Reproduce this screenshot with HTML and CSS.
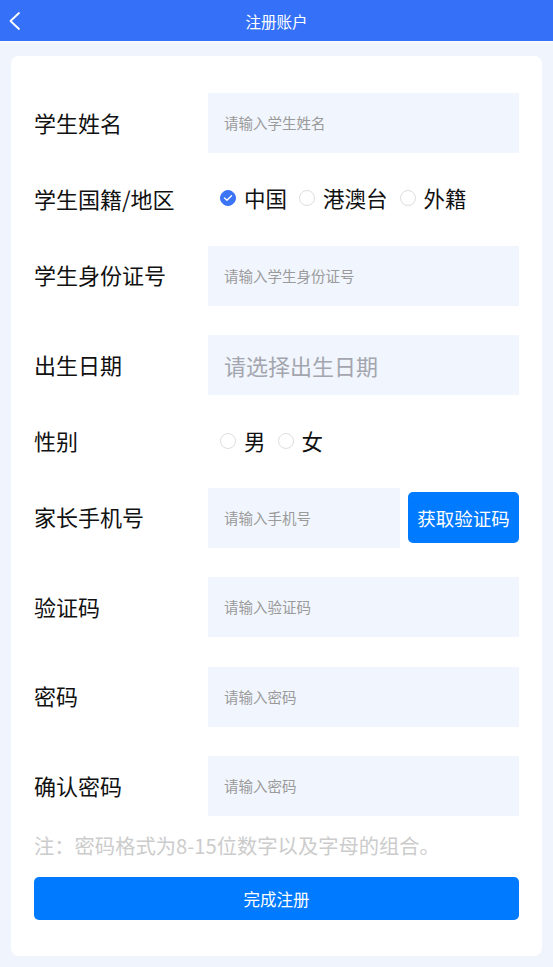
FILE: index.html
```html
<!DOCTYPE html>
<html lang="zh-CN">
<head>
<meta charset="utf-8">
<title>注册账户</title>
<link rel="stylesheet" href="styles.css">
</head>
<body>
<header class="nav">
  <span class="back">
    <svg width="12" height="20" viewBox="0 0 12 20"><polyline points="10,2 1.5,10 10,18" fill="none" stroke="#fff" stroke-width="1.8" stroke-linecap="round" stroke-linejoin="round"/></svg>
  </span>
  <h1 class="title">注册账户</h1>
  <span></span>
</header>
<main class="card">
  <div class="form">
    <div class="row">
      <label class="label">学生姓名</label>
      <div class="field">请输入学生姓名</div>
    </div>
    <div class="row row-radio">
      <label class="label">学生国籍/地区</label>
      <div class="radios">
        <span class="radio"><span class="dot checked"><svg width="10" height="8" viewBox="0 0 10 8"><polyline points="1.5,4 4,6.3 8.5,1.8" fill="none" stroke="#fff" stroke-width="1.4" stroke-linecap="round" stroke-linejoin="round"/></svg></span>中国</span>
        <span class="radio"><span class="dot"></span>港澳台</span>
        <span class="radio"><span class="dot"></span>外籍</span>
      </div>
    </div>
    <div class="row">
      <label class="label">学生身份证号</label>
      <div class="field">请输入学生身份证号</div>
    </div>
    <div class="row">
      <label class="label">出生日期</label>
      <div class="field field-lg">请选择出生日期</div>
    </div>
    <div class="row row-radio">
      <label class="label">性别</label>
      <div class="radios">
        <span class="radio"><span class="dot"></span>男</span>
        <span class="radio"><span class="dot"></span>女</span>
      </div>
    </div>
    <div class="row">
      <label class="label">家长手机号</label>
      <div class="phone">
        <div class="field">请输入手机号</div>
        <button class="code-btn">获取验证码</button>
      </div>
    </div>
    <div class="row">
      <label class="label">验证码</label>
      <div class="field">请输入验证码</div>
    </div>
    <div class="row">
      <label class="label">密码</label>
      <div class="field">请输入密码</div>
    </div>
    <div class="row">
      <label class="label">确认密码</label>
      <div class="field">请输入密码</div>
    </div>
  </div>
  <p class="note">注：密码格式为8-15位数字以及字母的组合。</p>
  <button class="submit">完成注册</button>
</main>
</body>
</html>
```
FILE: styles.css
```css
* { box-sizing: border-box; }
html, body { margin: 0; padding: 0; }
body {
  background: #f0f4fc;
  font-family: "Noto Sans CJK SC", "Noto Sans", sans-serif;
  color: #111;
  width: 553px;
  min-height: 967px;
}
.nav {
  height: 41px;
  background: #3471f8;
  display: grid;
  grid-template-columns: 40px 1fr 40px;
  align-items: center;
  box-shadow: 0 2px 2px rgba(255,255,255,0.6);
}
.back {
  display: flex;
  align-items: center;
  padding-left: 9px;
  height: 41px;
}
.title {
  margin: 0;
  text-align: center;
  color: #fff;
  font-size: 15.5px;
  font-weight: 400;
  line-height: 40px;
}
.card {
  display: block;
  margin: 15px 11px 0;
  background: #fff;
  border-radius: 8px;
  padding: 37px 23px 36px;
}
.form {
  display: flex;
  flex-direction: column;
  gap: 29.4px;
}
.row {
  display: grid;
  grid-template-columns: 174px 1fr;
  align-items: center;
  min-height: 60px;
}
.row-radio { min-height: 34px; }
.label {
  font-size: 22px;
  line-height: 30px;
  padding-bottom: 3px;
  color: #111;
}
.field {
  height: 60px;
  background: #f1f5fd;
  padding-left: 16px;
  padding-bottom: 1px;
  display: flex;
  align-items: center;
  font-size: 14.5px;
  color: #9a9a9a;
}
.field-lg {
  font-size: 22px;
  color: #a3a6ae;
}
.radios {
  display: flex;
  align-items: center;
  gap: 12px;
  padding-left: 12px;
  padding-bottom: 2px;
}
.radio {
  display: flex;
  align-items: center;
  gap: 8px;
  font-size: 21.5px;
  line-height: 30px;
  color: #111;
}
.dot {
  width: 16px;
  height: 16px;
  border-radius: 50%;
  border: 1px solid #dedede;
  display: flex;
  align-items: center;
  justify-content: center;
}
.dot.checked {
  background: #3b74f5;
  border-color: #3b74f5;
}
.phone {
  display: grid;
  grid-template-columns: 1fr 111px;
  gap: 8px;
  align-items: center;
}
.code-btn {
  height: 51px;
  border: none;
  border-radius: 5px;
  background: #007aff;
  color: #fff;
  font-family: inherit;
  font-size: 18.5px;
  padding: 0;
}
.note {
  margin: 15px 0 18px;
  font-size: 20.3px;
  line-height: 28px;
  color: #cccccc;
}
.submit {
  display: block;
  width: 100%;
  height: 43px;
  border: none;
  border-radius: 5px;
  background: #007aff;
  color: #fff;
  font-family: inherit;
  font-size: 16.5px;
  padding: 0;
}
```
